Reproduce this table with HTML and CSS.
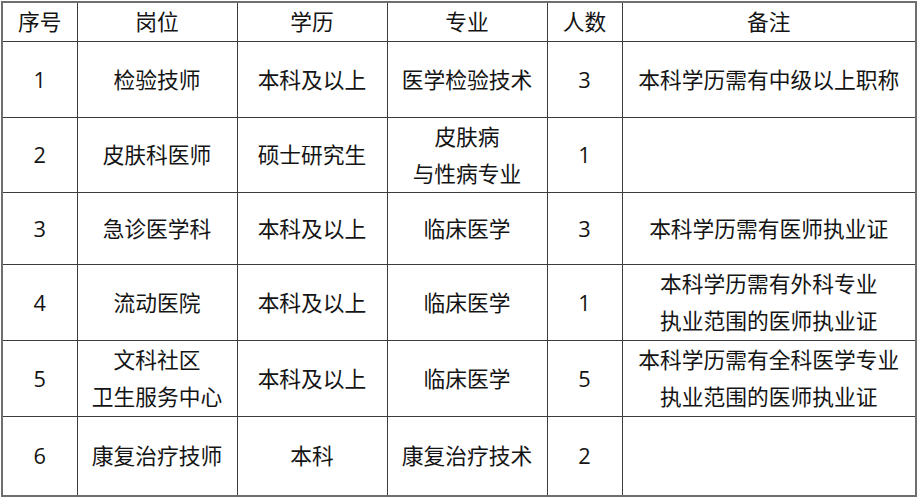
FILE: index.html
```html
<!DOCTYPE html>
<html lang="zh-CN">
<head>
<meta charset="utf-8">
<title>招聘岗位</title>
<link rel="stylesheet" href="styles.css">
</head>
<body>
<table class="jobs">
  <colgroup>
    <col class="c-no"><col class="c-post"><col class="c-edu"><col class="c-major"><col class="c-num"><col class="c-note">
  </colgroup>
  <thead>
    <tr class="r-head"><th>序号</th><th>岗位</th><th>学历</th><th>专业</th><th>人数</th><th>备注</th></tr>
  </thead>
  <tbody>
    <tr class="r1"><td>1</td><td>检验技师</td><td>本科及以上</td><td>医学检验技术</td><td>3</td><td>本科学历需有中级以上职称</td></tr>
    <tr class="r2"><td>2</td><td>皮肤科医师</td><td>硕士研究生</td><td>皮肤病<br>与性病专业</td><td>1</td><td></td></tr>
    <tr class="r3"><td>3</td><td>急诊医学科</td><td>本科及以上</td><td>临床医学</td><td>3</td><td>本科学历需有医师执业证</td></tr>
    <tr class="r4"><td>4</td><td>流动医院</td><td>本科及以上</td><td>临床医学</td><td>1</td><td>本科学历需有外科专业<br>执业范围的医师执业证</td></tr>
    <tr class="r5"><td>5</td><td>文科社区<br>卫生服务中心</td><td>本科及以上</td><td>临床医学</td><td>5</td><td>本科学历需有全科医学专业<br>执业范围的医师执业证</td></tr>
    <tr class="r6"><td>6</td><td>康复治疗技师</td><td>本科</td><td>康复治疗技术</td><td>2</td><td></td></tr>
  </tbody>
</table>
</body>
</html>
```
FILE: styles.css
```css
html, body {
  margin: 0;
  padding: 0;
  background: #ffffff;
}
body {
  font-family: "Open Sans", "Noto Sans CJK SC", sans-serif;
  color: #141414;
}
.jobs {
  border-collapse: collapse;
  table-layout: fixed;
  width: 916px;
  margin: 1px 0 0 1px;
  border: 2px solid #6e6e6e;
}
.c-no { width: 75px; }
.c-post { width: 160px; }
.c-edu { width: 150px; }
.c-major { width: 160px; }
.c-num { width: 75px; }
.c-note { width: 294px; }
.jobs th, .jobs td {
  border: 1px solid #3c3c3c;
  padding: 0;
  text-align: center;
  vertical-align: middle;
  font-size: 21.75px;
  font-weight: normal;
  line-height: 37px;
  white-space: nowrap;
}
.r-head { height: 39px; }
.r1 { height: 76px; }
.r2 { height: 75px; }
.r3 { height: 72px; }
.r4 { height: 76px; }
.r5 { height: 76px; }
.r6 { height: 80px; }
```
